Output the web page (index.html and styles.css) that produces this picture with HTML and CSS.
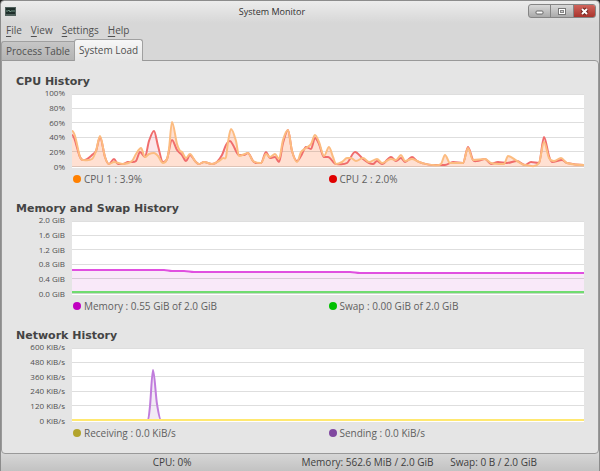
FILE: index.html
```
<!DOCTYPE html>
<html lang="en">
<head>
    <meta charset="UTF-8">
    <meta name="viewport" content="width=device-width, initial-scale=1.0">
    <title>System Monitor</title>
    <link rel="stylesheet" href="styles.css">
</head>
<body>

<div class="window">
    <header class="titlebar">
        <svg class="app-icon" viewBox="0 0 11 9">
            <rect width="11" height="9" fill="#50605c"/>
            <rect x="1" y="1" width="9" height="6" fill="#1f2f2b"/>
            <path d="M1 4h2l1-1 1 2 1-1h4" fill="none" stroke="#719486"/>
        </svg>
        <h1>System Monitor</h1>
        <div class="controls">
            <button aria-label="Minimize">
                <svg viewBox="0 0 9 9"><rect x="1" y="4" width="7" height="3" rx="1" fill="#fff" stroke="#666"/></svg>
            </button>
            <button aria-label="Maximize">
                <svg viewBox="0 0 9 9"><rect x="1.5" y="1.5" width="7" height="6" fill="#fff" stroke="#777"/><rect x="3.5" y="3.5" width="3" height="2" fill="#ccc" stroke="#888"/></svg>
            </button>
            <button class="close" aria-label="Close">
                <svg viewBox="0 0 9 9"><path d="M2 2l5 5M7 2l-5 5" stroke="#6e2420" stroke-width="4"/><path d="M2 2l5 5M7 2l-5 5" stroke="#fff" stroke-width="2"/></svg>
            </button>
        </div>
    </header>

    <nav class="menu">
        <button><u>F</u>ile</button>
        <button><u>V</u>iew</button>
        <button><u>S</u>ettings</button>
        <button><u>H</u>elp</button>
    </nav>

    <div class="tabs" role="tablist">
        <button role="tab">Process Table</button>
        <button role="tab" class="active" aria-selected="true">System Load</button>
    </div>

    <main class="panel">
        <section>
            <h2>CPU History</h2>
            <div class="chart">
                <div class="axis">
                    <span>100%</span><span>80%</span><span>60%</span><span>40%</span><span>20%</span><span>0%</span>
                </div>
                <svg class="plot" id="cpu" viewBox="0 0 512 74" preserveAspectRatio="none"></svg>
            </div>
            <div class="legend">
                <span><i class="dot orange"></i>CPU 1 : 3.9%</span>
                <span><i class="dot red"></i>CPU 2 : 2.0%</span>
            </div>
        </section>

        <section>
            <h2>Memory and Swap History</h2>
            <div class="chart">
                <div class="axis">
                    <span>2.0 GiB</span><span>1.6 GiB</span><span>1.2 GiB</span><span>0.8 GiB</span><span>0.4 GiB</span><span>0.0 GiB</span>
                </div>
                <svg class="plot" id="memory" viewBox="0 0 512 74" preserveAspectRatio="none"></svg>
            </div>
            <div class="legend">
                <span><i class="dot magenta"></i>Memory : 0.55 GiB of 2.0 GiB</span>
                <span><i class="dot green"></i>Swap : 0.00 GiB of 2.0 GiB</span>
            </div>
        </section>

        <section>
            <h2>Network History</h2>
            <div class="chart">
                <div class="axis">
                    <span>600 KiB/s</span><span>480 KiB/s</span><span>360 KiB/s</span><span>240 KiB/s</span><span>120 KiB/s</span><span>0 KiB/s</span>
                </div>
                <svg class="plot" id="network" viewBox="0 0 512 74" preserveAspectRatio="none"></svg>
            </div>
            <div class="legend">
                <span><i class="dot olive"></i>Receiving : 0.0 KiB/s</span>
                <span><i class="dot purple"></i>Sending : 0.0 KiB/s</span>
            </div>
        </section>
    </main>

    <footer class="status">
        <span>CPU: 0%</span>
        <span>Memory: 562.6 MiB / 2.0 GiB</span>
        <span>Swap: 0 B / 2.0 GiB</span>
    </footer>
</div>

<script src="charts.js"></script>
</body>
</html>
```
FILE: styles.css
```
* {
    box-sizing: border-box;
}

body {
    margin: 0;
    background: #222;
    font-family: "Open Sans", "Noto Sans", sans-serif;
    font-size: 10px;
    color: #505050;
}

button {
    margin: 0;
    padding: 0;
    border: none;
    background: none;
    font: inherit;
    color: inherit;
}

.window {
    display: flex;
    flex-direction: column;
    min-height: 100vh;
    border: 1px solid #8c8c8c;
    border-radius: 4px 4px 0 0;
    background: linear-gradient(#ececec, #d7d7d7 22px);
    overflow: hidden;
}

.titlebar {
    display: grid;
    grid-template-columns: 12px 1fr 68px;
    align-items: center;
    height: 20px;
    padding: 0 3px;
}

.app-icon {
    width: 11px;
    height: 9px;
    margin-left: 1px;
}

.titlebar h1 {
    margin: 0;
    font-size: 9px;
    font-weight: normal;
    text-align: center;
    color: #303030;
}

.controls {
    display: flex;
    height: 14px;
    border: 1px solid #858585;
    border-radius: 3px;
    background: linear-gradient(#d8d8d8, #aaa);
    overflow: hidden;
}

.controls button {
    display: flex;
    flex: 1;
    align-items: center;
    justify-content: center;
    border-right: 1px solid #858585;
}

.controls .close {
    border: none;
    background: linear-gradient(#d0645c, #a9342d);
}

.controls svg {
    width: 9px;
    height: 9px;
}

.menu {
    display: flex;
    gap: 9px;
    height: 18px;
    padding-left: 5px;
}

.menu u {
    text-underline-offset: 2px;
}

.tabs {
    display: flex;
    align-items: flex-end;
    height: 22px;
    margin-bottom: -1px;
}

.tabs button {
    height: 20px;
    padding: 0 4px;
    border: 1px solid #a0a0a0;
    border-right: none;
    border-radius: 3px 0 0 0;
    background: linear-gradient(#c6c6c6, #b4b4b4);
}

.tabs .active {
    position: relative;
    height: 22px;
    padding-bottom: 2px;
    border-right: 1px solid #a0a0a0;
    border-bottom: none;
    border-radius: 3px 3px 0 0;
    background: linear-gradient(#f7f7f7, #e5e5e5);
}

.panel {
    display: flex;
    flex: 1;
    flex-direction: column;
    gap: 14px;
    padding: 13px 14px 12px;
    border: 1px solid #999;
    border-radius: 0 4px 4px 4px;
    background: #e5e5e5;
}

.panel h2 {
    margin: 0 0 4px;
    font-family: "DejaVu Sans", sans-serif;
    font-size: 11px;
    line-height: 16px;
    color: #444;
}

.chart {
    display: grid;
    grid-template-columns: 49px 1fr;
    gap: 7px;
}

.axis {
    display: flex;
    flex-direction: column;
    justify-content: space-between;
    margin: -7px 0 -5px;
    font-size: 8px;
    line-height: 12px;
    text-align: right;
    white-space: nowrap;
    color: #505050;
}

.plot {
    display: block;
    width: 100%;
    height: 74px;
    background: #fff;
}

.legend {
    display: grid;
    grid-template-columns: 1fr 1fr;
    margin: 3px 0 0 57px;
    line-height: 16px;
    color: #606060;
}

.legend span {
    display: flex;
    align-items: center;
    gap: 3px;
}

.dot {
    width: 8px;
    height: 8px;
    border-radius: 50%;
}

.orange { background: #ff8000; }
.red { background: #e00000; }
.magenta { background: #c000c0; }
.green { background: #00c000; }
.olive { background: #b3a42c; }
.purple { background: #8048a0; }

.status {
    display: grid;
    grid-template-columns: repeat(4, 1fr);
    padding-left: 3px;
    line-height: 17px;
    background: linear-gradient(#d6d6d6, #c2c2c2);
    color: #404040;
}

.status span:first-child {
    grid-column-start: 2;
}
```
FILE: charts.js
```
const HEIGHT = 74;

const cpu1 = [
    [0,37],[3,42],[8,63],[11,66],[20,65],[24,57],[28,42],[33,63],[37,70],[42,68],[51,70],[60,67],[64,60],[69,54],
    [73,63],[77,60],[82,59],[86,62],[91,69],[95,65],[97,55],[100,28],[105,50],[108,57],[110,58],[114,64],[118,60],
    [123,67],[127,70],[132,68],[140,70],[147,67],[151,64],[154,63],[156,48],[159,35],[164,47],[167,62],[176,59],
    [181,67],[189,69],[194,60],[198,63],[203,60],[207,65],[211,46],[216,36],[220,57],[225,68],[229,58],[234,54],
    [239,50],[243,41],[247,48],[252,62],[257,53],[261,63],[264,70],[270,68],[275,64],[279,64],[284,67],[291,64],
    [297,68],[305,65],[310,69],[319,65],[324,66],[329,61],[333,67],[340,65],[345,67],[350,69],[361,71],[369,70],
    [373,61],[378,69],[391,69],[396,54],[401,66],[413,65],[419,69],[432,70],[436,62],[445,67],[453,71],[467,69],
    [472,48],[477,64],[482,67],[489,64],[495,69],[512,71]
];

const cpu2 = [
    [0,41],[8,63],[11,66],[15,65],[20,61],[24,57],[28,43],[33,63],[37,70],[42,65],[46,70],[51,70],[56,68],[64,67],
    [68,58],[73,63],[77,47],[82,37],[86,52],[91,68],[95,65],[100,46],[105,56],[110,61],[114,67],[118,61],[123,67],
    [127,70],[132,68],[140,70],[145,68],[150,61],[154,51],[158,47],[161,51],[167,61],[172,61],[176,59],[181,67],
    [185,69],[189,69],[194,58],[198,64],[203,63],[207,68],[211,49],[216,36],[220,57],[225,67],[229,62],[234,53],
    [239,55],[243,44],[247,50],[252,63],[256,63],[264,70],[275,69],[283,58],[291,65],[297,69],[301,70],[305,67],
    [310,70],[319,63],[324,67],[329,64],[333,68],[340,63],[345,67],[350,69],[361,71],[373,71],[381,68],[391,69],
    [396,53],[401,66],[405,67],[413,65],[419,70],[426,68],[435,69],[445,67],[453,71],[459,68],[467,69],[472,43],
    [477,62],[480,68],[490,66],[495,69],[512,71]
];

const memory = [[0,49],[92,49],[100,50],[112,50],[122,51],[278,51],[288,52],[512,52]];
const swap = [[0,71],[512,71]];
const sending = [[76,72],[78,58],[81,22],[85,56],[89,72]];
const receiving = [[0,72],[512,72]];

// Smooth curve: horizontal tangents at peaks, so that it never overshoots
function curve(points) {
    const slope = (i) => {
        const a = points[i - 1], b = points[i], c = points[i + 1];
        if (!a || !c || (b[1] - a[1]) * (c[1] - b[1]) <= 0) return 0;
        return (c[1] - a[1]) / (c[0] - a[0]);
    };
    let d = `M${points[0][0]} ${points[0][1]}`;
    for (let i = 1; i < points.length; i++) {
        const [x0, y0] = points[i - 1];
        const [x1, y1] = points[i];
        const t = (x1 - x0) / 3;
        d += `C${x0 + t} ${y0 + slope(i - 1) * t} ${x1 - t} ${y1 - slope(i) * t} ${x1} ${y1}`;
    }
    return d;
}

function draw(id, series) {
    let areas = '';
    let grid = '';
    let lines = '';
    series.forEach(({ points, color, fill }) => {
        const d = curve(points);
        areas += `<path d="${d}V${HEIGHT - 1}H${points[0][0]}Z" fill="${fill}"/>`;
        lines += `<path d="${d}" fill="none" stroke="${color}" stroke-width="2"/>`;
    });
    [0, 14, 28, 43, 57, 72].forEach(y => {
        grid += `<rect y="${y}" width="512" height="1" fill="#000" fill-opacity="0.13"/>`;
    });
    document.getElementById(id).innerHTML = areas + grid + lines;
}

draw('cpu', [
    { points: cpu2, color: '#f06c6c', fill: '#fbe6ea' },
    { points: cpu1, color: '#fcbc80', fill: '#ffe0d2' }
]);
draw('memory', [
    { points: memory, color: '#e050e0', fill: '#f9e9f9' },
    { points: swap, color: '#70dc70', fill: '#e5f8e5' }
]);
draw('network', [
    { points: sending, color: '#c07cdc', fill: '#f2eaf5' },
    { points: receiving, color: '#ffe870', fill: '#fff' }
]);
```
